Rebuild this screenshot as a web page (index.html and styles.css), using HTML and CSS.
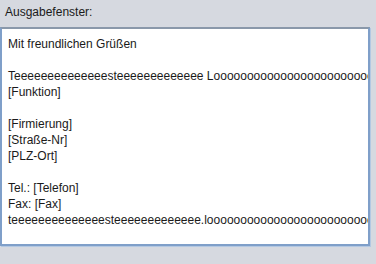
FILE: index.html
```html
<!DOCTYPE html>
<html>
<head>
<meta charset="utf-8">
<link rel="stylesheet" href="styles.css">
</head>
<body>
<div class="panel">
  <div class="label">Ausgabefenster:</div>
  <div class="output"><div class="text">Mit freundlichen Grüßen

Teeeeeeeeeeeeeesteeeeeeeeeeeee Looooooooooooooooooooooooooooooooooooo
[Funktion]

[Firmierung]
[Straße-Nr]
[PLZ-Ort]

Tel.: [Telefon]
Fax: [Fax]
teeeeeeeeeeeeeesteeeeeeeeeeeee.looooooooooooooooooooooooooooooooooooooo</div></div>
</div>
</body>
</html>
```
FILE: styles.css
```css
html, body {
  margin: 0;
  padding: 0;
  background: #d6d9e0;
}
.panel {
  width: 376px;
  height: 264px;
  font-family: "Liberation Sans", Arial, sans-serif;
  font-size: 12px;
  color: #1a1a1a;
}
.label {
  height: 27px;
  line-height: 24px;
  padding-left: 5px;
  box-sizing: border-box;
}
.output {
  width: 370px;
  height: 219px;
  box-sizing: border-box;
  background: #ffffff;
  border: 2px solid #7f9fc9;
  border-top-color: #8a98aa;
  box-shadow: 1px 1px 0 0 #b3c8e2;
  overflow: hidden;
  padding: 7px 0 0 6px;
}
.text {
  white-space: pre;
  line-height: 16px;
}
```
